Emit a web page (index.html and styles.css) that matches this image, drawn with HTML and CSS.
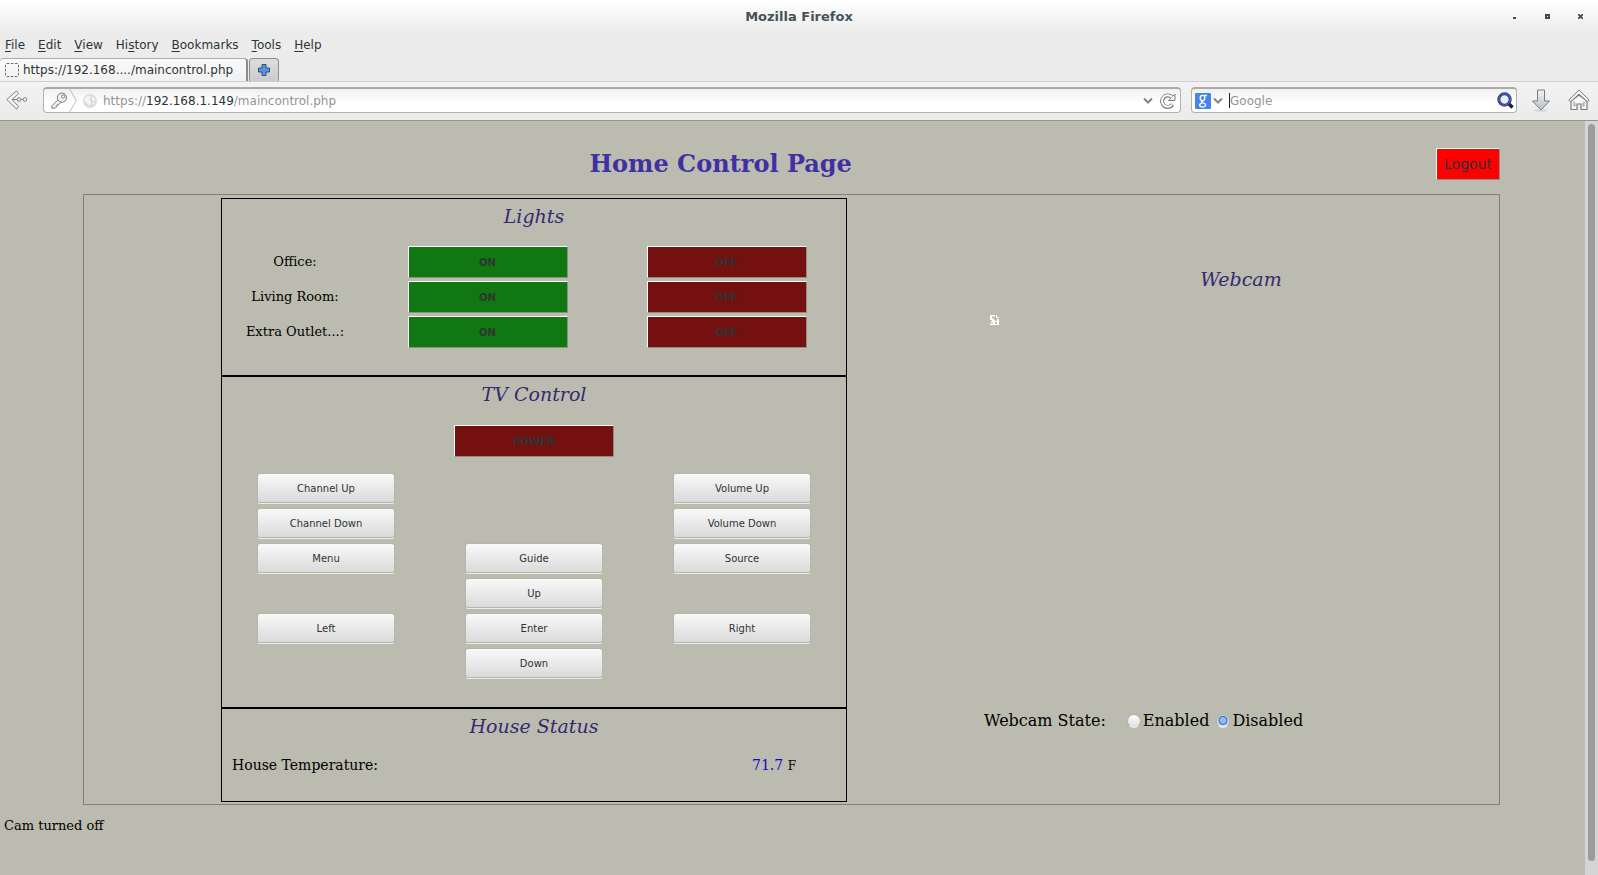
FILE: index.html
```html
<!DOCTYPE html>
<html lang="en">
<head>
<meta charset="utf-8">
<title>Mozilla Firefox</title>
<link rel="stylesheet" href="styles.css">
</head>
<body>
<div class="window">
  <header class="chrome">
    <div class="titlebar">
      <span class="window-title">Mozilla Firefox</span>
      <div class="window-buttons">
        <button type="button" aria-label="Minimize"><svg width="5" height="5" viewBox="0 0 5 5"><path d="M1 3h3v2H1z" fill="#3f4c52"/></svg></button>
        <button type="button" aria-label="Maximize"><svg width="5" height="5" viewBox="0 0 5 5"><path d="M0 0h5v5H0zM2 2v1h1V2z" fill="#3f4c52" fill-rule="evenodd"/></svg></button>
        <button type="button" aria-label="Close"><svg width="5" height="5" viewBox="0 0 5 5"><path d="M0 0l5 5M5 0L0 5" stroke="#3f4c52" stroke-width="1.7"/></svg></button>
      </div>
    </div>
    <nav class="menubar">
      <button type="button"><u>F</u>ile</button>
      <button type="button"><u>E</u>dit</button>
      <button type="button"><u>V</u>iew</button>
      <button type="button">Hi<u>s</u>tory</button>
      <button type="button"><u>B</u>ookmarks</button>
      <button type="button"><u>T</u>ools</button>
      <button type="button"><u>H</u>elp</button>
    </nav>
    <div class="tabstrip">
      <button type="button" class="tab">
        <svg width="14" height="14" viewBox="0 0 14 14"><rect x=".5" y=".5" width="13" height="13" rx="1.5" fill="none" stroke="#6a6a6a" stroke-dasharray="2.5 1.5"/></svg>
        <span>https://192.168..../maincontrol.php</span>
      </button>
      <button type="button" class="new-tab" aria-label="New tab">
        <svg width="12" height="12" viewBox="0 0 12 12"><path d="M4 .5h4V4h3.500v4H8v3.500H4V8H.5V4H4z" fill="#5f93d2" stroke="#26508c"/></svg>
      </button>
    </div>
    <div class="toolbar">
      <button type="button" class="back" aria-label="Back">
        <svg width="22" height="20" viewBox="0 0 22 20" fill="#f8f8f8" stroke="#7d7d7d"><path d="M10.500 1L.8 9.500 10.500 19l2-2.500L6 9.500l6.500-6z"/><circle cx="13" cy="9.500" r="1.800"/><circle cx="19" cy="9.500" r="1.800"/><path d="M6 9.500h5M15 9.500h2"/></svg>
      </button>
      <div class="field url-field">
        <svg width="34" height="23" viewBox="0 0 34 24" fill="none"><path d="M26 0l7 12-7 12" stroke="#b8b8b8"/><g stroke="#777"><path d="M14 11L7.500 17.500v2.500h3.500l1-1v-1.500h1.500V16H15l2-2" fill="#f1f1f1"/><circle cx="18" cy="9" r="4.800" fill="#f1f1f1"/><circle cx="19.200" cy="7.800" r="1.700" fill="#fff"/></g></svg>
        <svg class="globe" width="14" height="14" viewBox="0 0 14 14"><circle cx="7" cy="7" r="7" fill="#dcdcdc"/><path d="M2 4l4-2.500 2 2L6 6l2 2-2 4-2-3-2.500-2zM9 2l3 3v2L9 6zM9 9l3-1-2 3z" fill="#f5f5f5"/></svg>
        <span class="url"><span>https://</span><b>192.168.1.149</b><span>/maincontrol.php</span></span>
        <button type="button" aria-label="History"><svg width="10" height="8" viewBox="0 0 10 8"><path d="M1 1.500l4 4 4-4" fill="none" stroke="#858585" stroke-width="2"/></svg></button>
        <button type="button" aria-label="Reload"><svg width="16" height="16" viewBox="0 0 16 16" fill="none"><path d="M12.500 11.500A5.700 5.700 0 1 1 11.600 4" stroke="#7c7c7c" stroke-width="4"/><path d="M8.500 7.500H15V1z" fill="#fff" stroke="#7c7c7c"/><path d="M12 11.700A5.700 5.700 0 1 1 12 4.200" stroke="#fff" stroke-width="2"/></svg></button>
      </div>
      <div class="field search-field">
        <svg width="16" height="16" viewBox="0 0 16 16"><rect width="16" height="16" rx="1" fill="#4683ea"/><g fill="none" stroke="#fff" stroke-width="1.400"><ellipse cx="7.500" cy="5" rx="2.300" ry="2.600"/><path d="M9 2.500h3M8 7.500c-2.500 1-1.500 2 .5 2.600 3.500.9 2 4-.8 4-3.400 0-4.300-3-1-4"/></g></svg>
        <svg width="10" height="8" viewBox="0 0 10 8"><path d="M1 1.500l4 4 4-4" fill="none" stroke="#858585" stroke-width="2"/></svg>
        <input type="text" placeholder="Google" aria-label="Search Google">
        <button type="button" aria-label="Search"><svg width="17" height="17" viewBox="0 0 17 17" fill="none"><path d="M11 11l4.500 4.500" stroke="#222" stroke-width="3.600"/><circle cx="7.500" cy="7.500" r="5.700" fill="#e4eefb" stroke="#273880" stroke-width="3"/><circle cx="7.500" cy="7.500" r="5.700" stroke="#6d80c0" stroke-width=".8"/></svg></button>
      </div>
      <button type="button" class="tool" aria-label="Downloads"><svg width="20" height="23" viewBox="0 0 20 23"><defs><linearGradient id="dl" x2="0" y2="1"><stop stop-color="#f2f3f4"/><stop offset="1" stop-color="#b9bec4"/></linearGradient></defs><ellipse cx="10" cy="21.500" rx="7" ry="1.300" fill="#d6d6d6"/><path d="M6.500 1h7v11h5L10 21 1.500 12h5z" fill="url(#dl)" stroke="#777c7f"/></svg></button>
      <button type="button" class="tool" aria-label="Home"><svg width="22" height="22" viewBox="0 0 22 22" fill="#f7f7f7" stroke="#7c7c7c"><path d="M3 12v8.500h6V15h4v5.500h6V12l-8-6z" stroke-width="1.200"/><path d="M6 12v5.500M16 12v5.500M7 14v3.500M15 14v3.500" fill="none" stroke-width=".7"/><path d="M11 1L.8 11l1.700 1.800L11 5l8.500 7.800 1.700-1.800z"/></svg></button>
    </div>
  </header>

  <div class="viewport">
    <main class="page">
      <div class="page-head">
        <h1>Home Control Page</h1>
        <button type="button" class="logout">Logout</button>
      </div>
      <div class="frame">
        <div class="panels">
          <section class="panel">
            <h2>Lights</h2>
            <div class="lights">
              <span>Office:</span><button type="button" class="switch on">ON</button><button type="button" class="switch off">OFF</button>
              <span>Living Room:</span><button type="button" class="switch on">ON</button><button type="button" class="switch off">OFF</button>
              <span>Extra Outlet...:</span><button type="button" class="switch on">ON</button><button type="button" class="switch off">OFF</button>
            </div>
          </section>
          <section class="panel tv">
            <h2>TV Control</h2>
            <button type="button" class="switch off">POWER</button>
            <div class="remote">
              <button type="button" class="key">Channel Up</button><span></span><button type="button" class="key">Volume Up</button>
              <button type="button" class="key">Channel Down</button><span></span><button type="button" class="key">Volume Down</button>
              <button type="button" class="key">Menu</button><button type="button" class="key">Guide</button><button type="button" class="key">Source</button>
              <span></span><button type="button" class="key">Up</button><span></span>
              <button type="button" class="key">Left</button><button type="button" class="key">Enter</button><button type="button" class="key">Right</button>
              <span></span><button type="button" class="key">Down</button><span></span>
            </div>
          </section>
          <section class="panel">
            <h2>House Status</h2>
            <div class="status"><span>House Temperature:</span><span class="reading"><span class="degrees">71.7</span> <small>F</small></span></div>
          </section>
        </div>
        <section class="webcam">
          <h2>Webcam</h2>
          <div class="feed"><svg width="9" height="10" viewBox="0 0 9 10"><path d="M0 0h5v1.500H2v2h2V5h1v1h2V4h2v6H0V8.500h3V7.500H1V6h1V5H0zM6 0h1v2h2v1H6zM5 7v2h2V7z" fill="#fff" fill-rule="evenodd"/></svg></div>
          <div class="webcam-state">
            <span class="caption">Webcam State:</span>
            <label><input type="radio" name="cam">Enabled</label>
            <label><input type="radio" name="cam" checked>Disabled</label>
          </div>
        </section>
      </div>
      <p class="message">Cam turned off</p>
    </main>
    <div class="scrollbar"><div class="thumb"></div></div>
  </div>
</div>
</body>
</html>
```
FILE: styles.css
```css
* { box-sizing: border-box; }
body { margin: 0; background: #bbbbaf; color: #000; font: 13px/18px "DejaVu Serif", serif; }
button { font-family: "DejaVu Sans", sans-serif; color: #2e3436; margin: 0; padding: 0; }
svg { display: block; flex: none; }
h1, h2, p { margin: 0; }
.window { display: flex; flex-direction: column; min-height: 100vh; }

/* Browser chrome */
.chrome { font: 12px/18px "DejaVu Sans", sans-serif; color: #2e3436; background: linear-gradient(#fff, #ececec 32px); border-bottom: 1px solid #94958f; }
.chrome button { border: 0; background: none; font-size: 12px; line-height: 18px; }
.titlebar { display: grid; grid-template-columns: 1fr auto 1fr; align-items: center; height: 33px; padding: 0 15px; }
.window-title { grid-column: 2; font-size: 13px; font-weight: bold; color: #455358; }
.window-buttons { display: flex; justify-content: flex-end; gap: 28px; }
.menubar { display: flex; gap: 13px; height: 25px; padding: 3px 5px 4px; }
.menubar u { text-underline-offset: 2px; }
.tabstrip { display: flex; gap: 1px; height: 23px; }
.chrome .tab { display: flex; align-items: center; gap: 4px; width: 248px; padding: 0 5px; white-space: nowrap; background: linear-gradient(#fafafa, #f1f1f1); border: 1px solid #aaa; border-width: 1px 2px 0 0; border-right-color: #8c8c8c; border-radius: 4px 4px 0 0; }
.chrome .new-tab { display: grid; place-items: center; width: 30px; background: linear-gradient(#dedede, #cbcbcb); border: 1px solid #8d8d8d; border-bottom: 0; border-radius: 4px 4px 0 0; }
.toolbar { display: flex; align-items: center; height: 39px; padding: 0 8px 2px 6px; background: linear-gradient(#f3f3f3, #ebebeb); border-top: 1px solid #cfcfcf; }
.back { margin-right: 15px; }
.field { display: flex; align-items: center; height: 26px; background: linear-gradient(#f0f0f0, #fff 60%); border: 1px solid #b3b3ac; border-top: 2px solid #aaa; border-radius: 4px; }
.url-field { flex: 1; gap: 5px; padding-right: 4px; margin-right: 10px; }
.globe { margin-right: 1px; }
.url { flex: 1; color: #949494; }
.url b { color: #2e3436; font-weight: normal; }
.url-field button + button { margin-left: 2px; }
.search-field { width: 326px; gap: 2px; padding: 0 2px 0 3px; margin-right: 14px; }
.search-field input { flex: 1; min-width: 0; height: 15px; margin-left: 4px; padding: 0; border: 0; border-left: 1px solid #222; outline: 0; background: none; font: 12px "DejaVu Sans", sans-serif; }
.search-field input::placeholder { color: #949494; opacity: 1; }
.tool + .tool { margin-left: 17px; }

/* Web page */
.viewport { display: flex; flex: 1; }
.page { flex: 1; }
.scrollbar { display: flex; width: 13px; padding: 3px 3px 14px; background: #d5d5d5; }
.thumb { flex: 1; background: #9b9c9e; border-radius: 4px; }
.page-head { display: grid; grid-template-columns: 90fr 10fr; align-items: center; justify-items: center; height: 73px; margin: 0 85px 0 83px; padding-top: 13px; }
h1 { color: #4130a4; font-size: 24px; line-height: 32px; }
.logout { justify-self: end; width: 64px; height: 32px; background: #f00; border: 1px solid #8d8d8d; border-top-color: #fff; border-left-color: #fff; font-size: 14px; }
h2 { color: #352a70; text-align: center; font-size: 19px; line-height: 24px; font-weight: normal; font-style: italic; }
.frame { display: grid; grid-template-columns: 137fr 626fr 652fr; margin: 0 85px 0 83px; padding: 3px 0 2px; border: 1px solid #808078; }
.panels { grid-column: 2; }
.panel { padding: 5px 0 26px; border: 1px solid #000; }
.lights { display: grid; grid-template-columns: 146fr 239fr 239fr; gap: 3px 0; place-items: center; margin-top: 18px; padding-bottom: 1px; }
.switch { width: 160px; height: 32px; border: 1px solid #8d8d80; border-top-color: #fff; border-left-color: #fff; font-size: 10px; font-weight: bold; }
.on { background: #117711; }
.off { background: #751010; }
.tv { display: grid; justify-items: center; padding-bottom: 28px; }
.tv .switch { margin-top: 19px; }
.remote { display: grid; grid-template-columns: repeat(3, 1fr); grid-auto-rows: 31px; gap: 4px 0; justify-items: center; width: 100%; margin-top: 16px; }
.key { width: 138px; height: 31px; border: 1px solid #b5b6ac; border-bottom-color: #ecece8; border-radius: 3px; background: linear-gradient(#f9f9f9, #d9d9d9); box-shadow: inset 0 -1px #b5b5b0; font-size: 10px; }
.status { display: flex; justify-content: space-between; margin-top: 18px; padding: 0 50px 0 10px; font-size: 14px; }
.degrees { color: #1606cc; }
.reading small { font-size: 12px; }
.webcam { display: flex; flex-direction: column; padding: 69px 0 72px 137px; }
.webcam h2 { width: 514px; max-width: 100%; }
.feed { flex: 1; padding: 24px 0 0 6px; }
.webcam-state { display: flex; align-items: center; gap: 7px; font-size: 16px; }
.webcam-state .caption { margin-right: 14px; }
.webcam-state label { display: flex; align-items: center; gap: 2px; }
.webcam-state input { appearance: none; width: 14px; height: 14px; margin: 0; border: 1px solid #b2b2aa; border-bottom-color: #eee; border-radius: 50%; background: linear-gradient(#fff, #dedede); }
.webcam-state input:checked { background: radial-gradient(circle at 50% 45%, #8cc0f5 0 3px, #3166ad 4px, #d8dde4 5px); }
.message { margin: 12px 4px 0; }
```
